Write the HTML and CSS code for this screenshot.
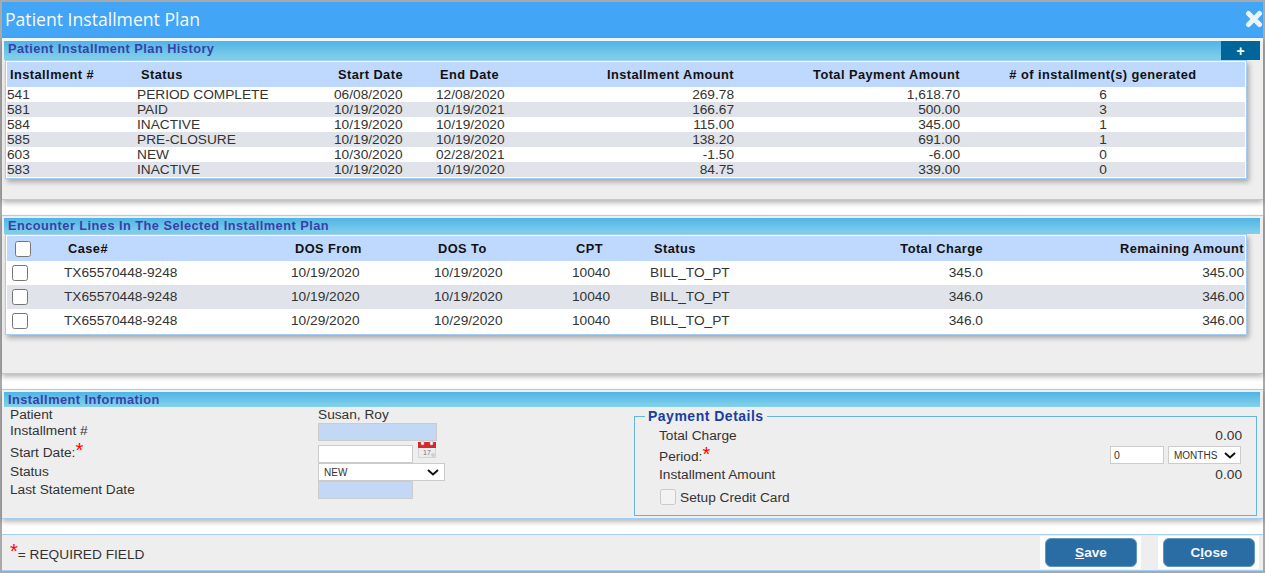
FILE: index.html
```html
<!DOCTYPE html>
<html lang="en">
<head>
<meta charset="utf-8">
<title>Patient Installment Plan</title>
<link rel="stylesheet" href="styles.css">
</head>
<body>
<div class="window">
  <header class="titlebar">
    <h1 class="title">Patient Installment Plan</h1>
    <svg class="close-icon" viewBox="0 0 18 18" aria-label="Close"><path d="M3.5 3.5 14.5 14.5M14.5 3.5 3.5 14.5" stroke="#eaf4fd" stroke-width="5" stroke-linecap="round"/></svg>
  </header>

  <section class="panel panel-history">
    <div class="band band-tall">
      <h2 class="band-title">Patient Installment Plan History</h2>
      <button class="plus" type="button">+</button>
    </div>
    <div class="table-box">
      <table class="grid grid-history">
        <colgroup><col class="h1"><col class="h2"><col class="h3"><col class="h4"><col class="h5"><col class="h6"><col class="h7"></colgroup>
        <thead><tr><th class="first">Installment #</th><th>Status</th><th>Start Date</th><th>End Date</th><th class="r">Installment Amount</th><th class="r">Total Payment Amount</th><th class="c"># of installment(s) generated</th></tr></thead>
        <tbody>
          <tr><td>541</td><td>PERIOD COMPLETE</td><td>06/08/2020</td><td>12/08/2020</td><td class="r">269.78</td><td class="r">1,618.70</td><td class="c">6</td></tr>
          <tr><td>581</td><td>PAID</td><td>10/19/2020</td><td>01/19/2021</td><td class="r">166.67</td><td class="r">500.00</td><td class="c">3</td></tr>
          <tr><td>584</td><td>INACTIVE</td><td>10/19/2020</td><td>10/19/2020</td><td class="r">115.00</td><td class="r">345.00</td><td class="c">1</td></tr>
          <tr><td>585</td><td>PRE-CLOSURE</td><td>10/19/2020</td><td>10/19/2020</td><td class="r">138.20</td><td class="r">691.00</td><td class="c">1</td></tr>
          <tr><td>603</td><td>NEW</td><td>10/30/2020</td><td>02/28/2021</td><td class="r">-1.50</td><td class="r">-6.00</td><td class="c">0</td></tr>
          <tr><td>583</td><td>INACTIVE</td><td>10/19/2020</td><td>10/19/2020</td><td class="r">84.75</td><td class="r">339.00</td><td class="c">0</td></tr>
        </tbody>
      </table>
    </div>
  </section>

  <div class="gap"></div>

  <section class="panel panel-lines">
    <div class="band">
      <h2 class="band-title">Encounter Lines In The Selected Installment Plan</h2>
    </div>
    <div class="table-box">
      <table class="grid grid-lines">
        <colgroup><col class="l1"><col class="l2"><col class="l3"><col class="l4"><col class="l5"><col class="l6"><col class="l7"><col class="l8"></colgroup>
        <thead><tr><th class="chk-head"><input type="checkbox" class="check"></th><th>Case#</th><th>DOS From</th><th>DOS To</th><th>CPT</th><th>Status</th><th class="r">Total Charge</th><th class="r">Remaining Amount</th></tr></thead>
        <tbody>
          <tr><td class="chk-cell"><input type="checkbox" class="check"></td><td>TX65570448-9248</td><td>10/19/2020</td><td>10/19/2020</td><td>10040</td><td>BILL_TO_PT</td><td class="r">345.0</td><td class="r">345.00</td></tr>
          <tr><td class="chk-cell"><input type="checkbox" class="check"></td><td>TX65570448-9248</td><td>10/19/2020</td><td>10/19/2020</td><td>10040</td><td>BILL_TO_PT</td><td class="r">346.0</td><td class="r">346.00</td></tr>
          <tr><td class="chk-cell"><input type="checkbox" class="check"></td><td>TX65570448-9248</td><td>10/29/2020</td><td>10/29/2020</td><td>10040</td><td>BILL_TO_PT</td><td class="r">346.0</td><td class="r">346.00</td></tr>
        </tbody>
      </table>
    </div>
  </section>

  <div class="gap"></div>

  <section class="panel panel-info">
    <div class="band band-short">
      <h2 class="band-title">Installment Information</h2>
    </div>
    <div class="info">
      <div class="info-left">
        <div class="info-row row-patient"><span class="info-label">Patient</span><span class="info-value">Susan, Roy</span></div>
        <div class="info-row row-number"><span class="info-label">Installment #</span><input class="field field-wide field-ro" type="text" readonly></div>
        <div class="info-row row-date"><span class="info-label">Start Date:<span class="star">*</span></span><input class="field field-mid" type="text">
          <svg class="cal" viewBox="0 0 18 17"><rect x="0.5" y="1.5" width="17" height="15" fill="#ececec" stroke="#d4d4d4"/><rect x="0" y="1" width="18" height="6" fill="#d9262c"/><rect x="3" y="0" width="3" height="4" rx="1" fill="#f3f3f3" stroke="#999" stroke-width=".5"/><rect x="12" y="0" width="3" height="4" rx="1" fill="#f3f3f3" stroke="#999" stroke-width=".5"/><text x="5" y="14" class="cal-text">17</text><circle cx="15" cy="14" r="2" fill="#cfcfcf"/></svg>
        </div>
        <div class="info-row row-status"><span class="info-label">Status</span><select class="select select-status"><option>NEW</option></select></div>
        <div class="info-row row-last"><span class="info-label">Last Statement Date</span><input class="field field-mid field-ro" type="text" readonly></div>
      </div>
      <fieldset class="payment">
        <legend class="payment-legend">Payment Details</legend>
        <div class="pay-row pay-total"><span>Total Charge</span><span>0.00</span></div>
        <div class="pay-row pay-period"><span class="period-label">Period:<span class="star">*</span></span>
          <span class="period-controls"><input class="field field-period" type="text" value="0"><select class="select select-months"><option>MONTHS</option></select></span>
        </div>
        <div class="pay-row pay-amount"><span>Installment Amount</span><span>0.00</span></div>
        <label class="pay-card"><input type="checkbox" class="check" disabled><span>Setup Credit Card</span></label>
      </fieldset>
    </div>
  </section>

  <div class="gap"></div>

  <footer class="footer">
    <span class="required"><span class="star">*</span>= REQUIRED FIELD</span>
    <div class="actions">
      <span class="btn-wrap"><button class="btn" type="button"><u>S</u>ave</button></span>
      <span class="btn-wrap"><button class="btn" type="button">C<u>l</u>ose</button></span>
    </div>
  </footer>
</div>
</body>
</html>
```
FILE: styles.css
```css
* { box-sizing: border-box; }
html, body { margin: 0; padding: 0; height: 573px; overflow: hidden; background: #fff; }
body { font-family: "Liberation Sans", Arial, sans-serif; font-size: 13.7px; color: #333; }

.window { width: 1265px; height: 573px; border: 2px solid #a9a9a9; display: flex; flex-direction: column; background: #fff; }

.titlebar { height: 36px; flex: none; background: #42a5f5; display: flex; justify-content: space-between; align-items: center; padding: 0 0 3px 3px; }
.title { margin: 0; font-family: "Open Sans", sans-serif; font-weight: 400; font-size: 17.6px; color: #f7fbff; }
.close-icon { width: 18px; height: 18px; }

.panel { flex: none; position: relative; background: #eee; border-bottom: 1px solid #a6cdf3; box-shadow: 0 3px 5px rgba(0,0,0,.28); }
.panel-history { height: 162px; border-top: 3px solid #eef6fe; }
.panel-lines { height: 159px; border-top: 1px solid #a6cdf3; padding-top: 2px; }
.panel-info { height: 130px; border-top: 1px solid #a6cdf3; padding-top: 2px; }
.gap { height: 15px; flex: none; background: #fff; }

.band { height: 16px; margin: 0 3px 0 2px; background: linear-gradient(#4fb4e7, #85d2ea); display: flex; justify-content: space-between; align-items: stretch; }
.band-tall { height: 19px; }
.band-short { height: 15px; }
.band-title { margin: 0; padding: 0 0 0 4px; font-size: 12.8px; line-height: 16px; font-weight: 700; letter-spacing: .45px; color: #3b3fa8; }
.plus { width: 39px; border: 0; padding: 0; background: #006699; color: #fff; font: 700 14px/16px "Liberation Sans", sans-serif; }

.table-box { margin: 0 16px 0 3px; padding: 1px; border: 1px solid #a6cdf3; background: #fff; box-shadow: 2px 3px 5px rgba(0,0,0,.3); }
.grid { border-collapse: collapse; table-layout: fixed; width: 100%; }
.grid th { height: 25px; padding: 0 0 0 4px; background: #bfd8fd; color: #111; font-size: 12.8px; font-weight: 700; letter-spacing: .45px; text-align: left; }
.grid th.first { padding-left: 3px; }
.grid td { padding: 0; color: #333; white-space: nowrap; overflow: hidden; }
.grid tbody tr:nth-child(even) td { background: #e0e4ea; }
.grid .r { text-align: right; padding-left: 0; padding-right: 1px; }
.grid .c { text-align: center; padding-left: 0; }

.grid-history td { height: 15px; line-height: 15px; }
.h1 { width: 130px; } .h2 { width: 197px; } .h3 { width: 102px; } .h4 { width: 100px; } .h5 { width: 199px; } .h6 { width: 226px; } .h7 { width: auto; }

.grid-lines td { height: 24px; line-height: 24px; }
.l1 { width: 57px; } .l2 { width: 227px; } .l3 { width: 143px; } .l4 { width: 138px; } .l5 { width: 78px; } .l6 { width: 150px; } .l7 { width: 184px; } .l8 { width: auto; }
.grid .chk-head { padding-left: 8px; }
.grid .chk-cell { padding-left: 5px; }
.check { width: 16px; height: 16px; margin: 0; display: block; }

.info { display: flex; height: 112px; }
.info-left { width: 632px; flex: none; padding: 0 0 0 8px; }
.info-row { display: flex; align-items: center; }
.info-label { width: 308px; flex: none; padding-bottom: 2px; }
.info-value { padding-bottom: 1px; }
.row-patient { height: 15px; }
.row-patient .info-label { padding-bottom: 1px; }
.row-number { height: 19px; }
.row-number .info-label { padding-bottom: 3px; }
.row-date { height: 22px; padding-top: 3px; }
.row-status { height: 18px; }
.row-last { height: 18px; }
.star { color: #f00; font-size: 20px; line-height: 10px; }

.field { height: 18px; border: 1px solid #ccc; background: #fff; padding: 0 3px; font: 10.5px "Liberation Sans", sans-serif; color: #333; border-radius: 0; outline: 0; }
.field-wide { width: 119px; }
.field-mid { width: 95px; }
.field-ro { background: #c3d8f5; }
.field-period { width: 54px; }
.cal { width: 18px; height: 17px; margin: -3px 0 0 5px; align-self: flex-start; }
.cal-text { font: 7px "Liberation Sans", sans-serif; fill: #777; }

.select { appearance: none; -webkit-appearance: none; height: 18px; border: 1px solid #ccc; border-radius: 0; color: #333; font: 10px "Liberation Sans", sans-serif; padding: 0 0 0 5px; background: #fff url("data:image/svg+xml,%3Csvg xmlns='http://www.w3.org/2000/svg' width='12' height='7' viewBox='0 0 12 7'%3E%3Cpath d='M1 1l5 4.5L11 1' fill='none' stroke='%23111' stroke-width='2'/%3E%3C/svg%3E") no-repeat; }
.select-status { width: 127px; background-position: right 5px center; }
.select-months { width: 73px; margin-left: 4px; background-position: right 4px center; }

.payment { margin: 1px 0 0; width: 623px; height: 108px; padding: 0 14px 0 24px; border: 1px solid #63b4de; border-radius: 0; }
.payment-legend { padding: 0 3px; margin-left: -14px; font-size: 14px; font-weight: 700; color: #1a3e9e; letter-spacing: .5px; line-height: 16px; }
.pay-row { display: flex; justify-content: space-between; align-items: center; }
.pay-total { height: 19px; margin-top: 2px; }
.pay-period { height: 20px; }
.period-label { padding-top: 2px; }
.period-controls { display: flex; margin-right: 1px; }
.pay-amount { height: 16px; margin-top: 1px; }
.pay-card { display: flex; align-items: center; gap: 4px; height: 20px; margin-top: 5px; padding-left: 1px; }

.footer { flex: 1; background: #eee; border-top: 1px solid #a6cdf3; border-bottom: 1px solid #a6cdf3; display: flex; justify-content: space-between; align-items: center; padding: 0 4px 0 8px; }
.required { padding-top: 2px; }
.required .star { vertical-align: 1px; }
.actions { display: flex; gap: 17px; }
.btn-wrap { display: block; background: #fff; padding: 2px 4px 2px 5px; }
.btn { display: block; width: 92px; height: 29px; border: 1px solid #5f97b8; border-radius: 6px; background: #2a6ca4; color: #f4f8fb; font: 700 13.6px "Liberation Sans", sans-serif; padding: 0; }
```
